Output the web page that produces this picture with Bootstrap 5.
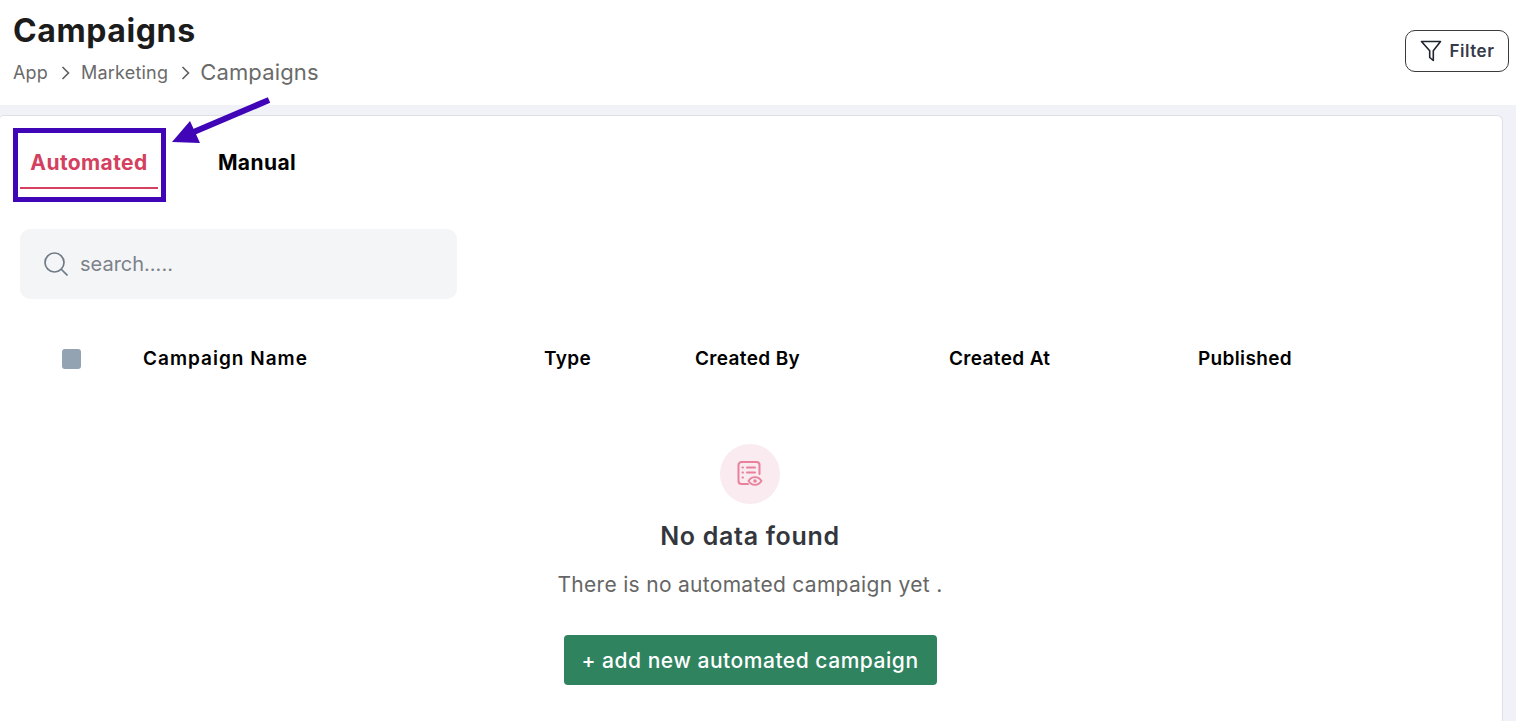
<!DOCTYPE html>
<html lang="en">
<head>
    <meta charset="UTF-8">
    <meta name="viewport" content="width=device-width, initial-scale=1.0">
    <title>Campaigns</title>
    <link href="https://cdn.jsdelivr.net/npm/bootstrap@5.3.0/dist/css/bootstrap.min.css" rel="stylesheet">
    <style>
        html, body { height: 100%; }
        body { font-family: Inter, "Open Sans", sans-serif; background: #f1f2f7; overflow: hidden; position: relative; }
        .page-head { height: 105px; padding: 13px 7px 0 13px; }
        .page-title { font-size: 32px; font-weight: 700; line-height: 36px; color: #1c1c1c; letter-spacing: .6px; margin: 0; }
        .crumbs { font-size: 18px; line-height: 24px; color: #6a6a6a; margin-top: 11px; letter-spacing: .2px; }
        .crumbs svg { margin: 0 11px 0 13px; }
        .crumbs .crumb-last { font-size: 22px; letter-spacing: .15px; margin-left: -1px; padding-bottom: 2px; }
        .filter-btn { width: 104px; height: 42px; margin-top: 17px; border: 1px solid #3a3a3a; border-radius: 10px; background: #fff; font-size: 17px; font-weight: 600; line-height: 24px; letter-spacing: .5px; color: #343a4a; padding: 0; }
        .main-card { height: 625px; margin: 10px 13px 0 0; border: 1px solid #dfe0e4; border-left: 0; border-radius: 4px 6px 0 0; padding: 12px 22px 0 20px; }
        .tab-item { font-size: 21px; font-weight: 700; line-height: 26px; height: 61px; padding-top: 22px; text-align: center; color: #000; letter-spacing: .4px; }
        .tab-on { width: 138px; color: #d4405f; border-bottom: 2px solid #d4405f; }
        .tab-off { width: 138px; margin-left: 30px; }
        .search-box { width: 437px; height: 70px; margin-top: 40px; border-radius: 10px; background: #f4f5f7; padding-left: 24px; gap: 12px; font-size: 20px; color: #7b8289; }
        .head-row { height: 20px; margin-top: 50px; font-size: 19px; font-weight: 600; line-height: 20px; color: #000; letter-spacing: .35px; }
        .head-check { width: 19px; height: 20px; margin: 0 62px 0 42px; border-radius: 3px; background: #94a3b1; }
        .col-name { width: 401px; letter-spacing: 1px; }
        .col-type { width: 151px; }
        .col-author { width: 254px; }
        .col-date { width: 249px; }
        .empty-icon { width: 60px; height: 60px; border-radius: 50%; background: #f9ebef; margin-top: 75px; }
        .empty-title { font-size: 25px; font-weight: 600; line-height: 32px; color: #33373d; margin: 16px 0 0; letter-spacing: .7px; }
        .empty-text { font-size: 21px; line-height: 26px; color: #666; margin: 20px 0 0; letter-spacing: .3px; }
        .add-btn { width: 373px; height: 50px; margin-top: 37px; padding: 1px 0 0; border: 0; border-radius: 4px; background: #2f835f; color: #fff; font-size: 21px; font-weight: 500; letter-spacing: .53px; }
        .mark-box { position: absolute; left: 13px; top: 128px; width: 153px; height: 74px; border: 5px solid #3f05b6; }
        .mark-arrow { position: absolute; left: 165px; top: 90px; }
    </style>
</head>
<body>
    <!-- Header -->
    <div class="page-head d-flex justify-content-between bg-white">
        <div>
            <h1 class="page-title">Campaigns</h1>
            <div class="crumbs d-flex align-items-center">
                <span>App</span>
                <svg width="9" height="14" viewBox="0 0 9 14" fill="none" stroke="#5f5f5f" stroke-width="1.6"><path d="M1.500 1l6 6-6 6"/></svg>
                <span>Marketing</span>
                <svg width="9" height="14" viewBox="0 0 9 14" fill="none" stroke="#5f5f5f" stroke-width="1.6"><path d="M1.500 1l6 6-6 6"/></svg>
                <span class="crumb-last">Campaigns</span>
            </div>
        </div>
        <button class="filter-btn d-flex align-items-center justify-content-center gap-2" type="button">
            <svg width="22" height="24" viewBox="0 0 22 24" fill="none" stroke="#20242e" stroke-width="1.6" stroke-linejoin="round"><path d="M1.500 2.500h19l-7.200 9.200v9.800l-3.600-3v-6.800z"/></svg>
            Filter
        </button>
    </div>

    <!-- Main card -->
    <div class="main-card bg-white">
        <div class="d-flex">
            <div class="tab-item tab-on">Automated</div>
            <div class="tab-item tab-off">Manual</div>
        </div>

        <div class="search-box d-flex align-items-center">
            <svg width="24" height="24" viewBox="0 0 24 24" fill="none" stroke="#6f7a86" stroke-width="1.7"><circle cx="10.500" cy="10.500" r="9.500"/><path d="M17.500 17.500l6 6"/></svg>
            <span>search.....</span>
        </div>

        <div class="head-row d-flex align-items-center">
            <div class="head-check"></div>
            <div class="col-name">Campaign Name</div>
            <div class="col-type">Type</div>
            <div class="col-author">Created By</div>
            <div class="col-date">Created At</div>
            <div>Published</div>
        </div>

        <div class="d-flex flex-column align-items-center">
            <div class="empty-icon d-flex align-items-center justify-content-center">
                <svg width="26" height="26" viewBox="0 0 26 26" fill="none" stroke="#e8819b" stroke-width="2" stroke-linecap="round">
                    <path d="M11 23H4.500a3 3 0 0 1-3-3V4a3 3 0 0 1 3-3h15a3 3 0 0 1 3 3v9"/>
                    <path d="M10 6.500h8M10 11.500h8"/>
                    <path d="M5.500 6.500h.5M5.500 11.500h.5M5.500 16.500h.5"/>
                    <path d="M11.500 20c1.700-2.600 3.800-3.800 6.500-3.800s4.800 1.200 6.500 3.800c-1.700 2.600-3.800 3.800-6.500 3.800s-4.800-1.200-6.500-3.800z" stroke-width="1.800"/>
                    <circle cx="18" cy="20" r="1" stroke-width="1.600"/>
                </svg>
            </div>
            <h2 class="empty-title">No data found</h2>
            <p class="empty-text">There is no automated campaign yet .</p>
            <button class="add-btn" type="button">+ add new automated campaign</button>
        </div>
    </div>

    <!-- Annotation over the tab -->
    <div class="mark-box"></div>
    <svg class="mark-arrow" width="110" height="60" viewBox="0 0 110 60">
        <path d="M104 10L24 44" stroke="#3f05b6" stroke-width="6"/>
        <path d="M7 52L25 31 35 53z" fill="#3f05b6"/>
    </svg>

    <script src="https://cdn.jsdelivr.net/npm/bootstrap@5.3.0/dist/js/bootstrap.bundle.min.js"></script>
</body>
</html>
